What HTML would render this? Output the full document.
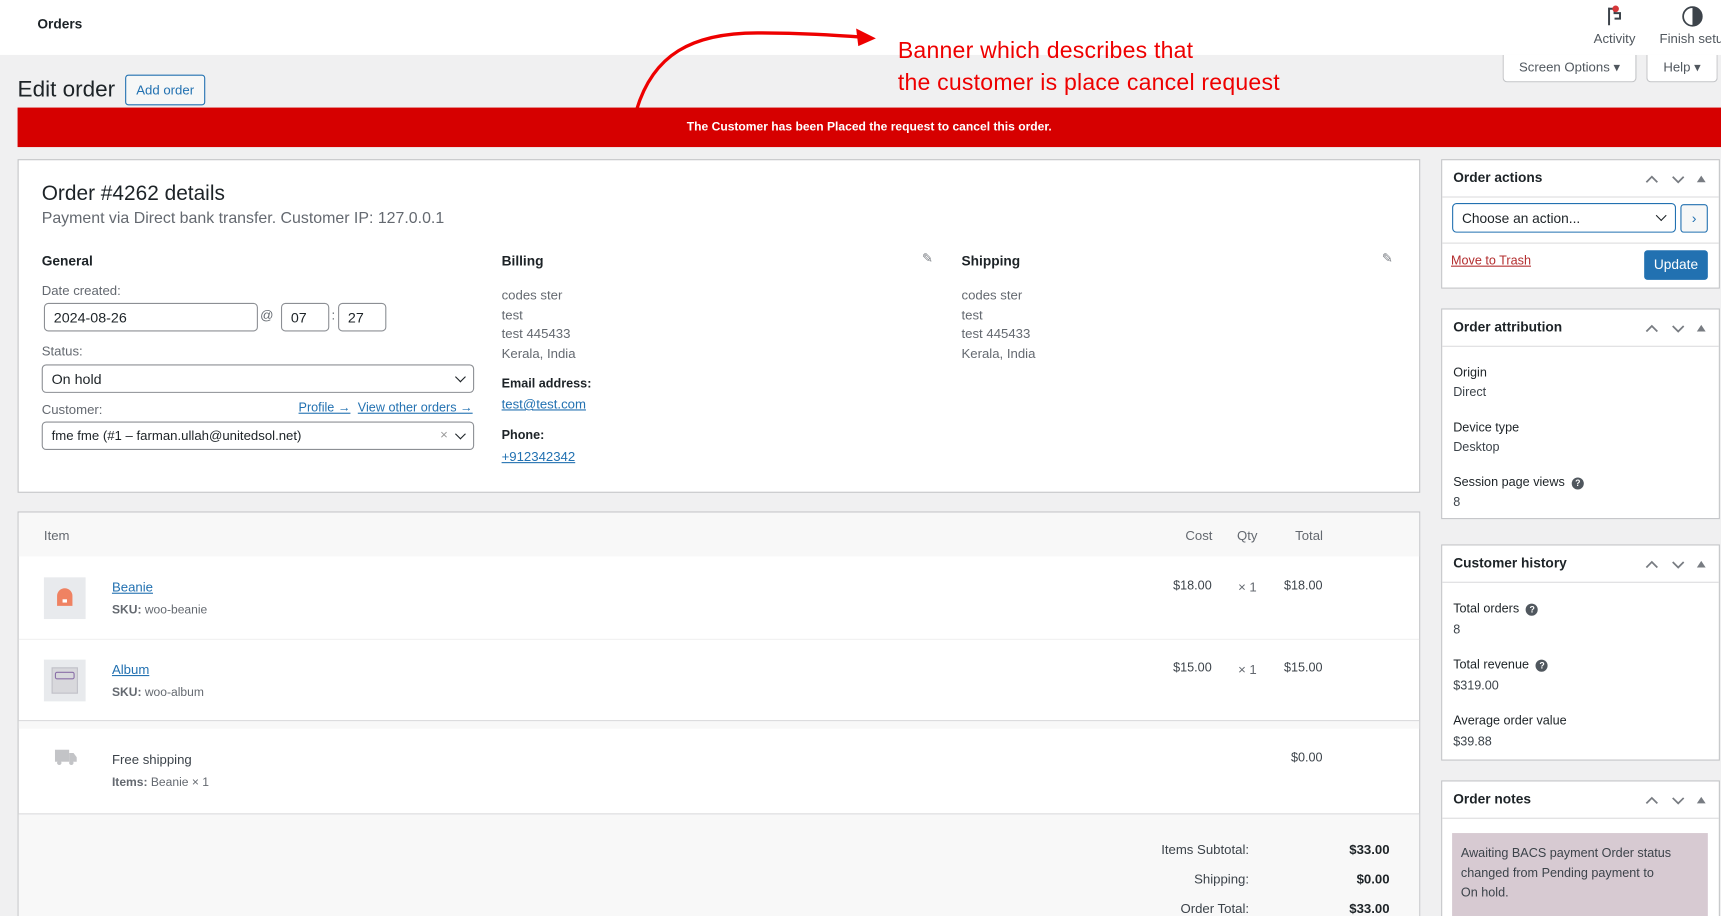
<!DOCTYPE html>
<html><head><meta charset="utf-8">
<style>
*{box-sizing:border-box;margin:0;padding:0}
html,body{width:1721px;height:916px;overflow:hidden;background:#f0f0f1}
#w{position:absolute;left:0;top:0;width:1568px;height:835px;overflow:hidden;transform:scale(1.09758);transform-origin:0 0;font-family:"Liberation Sans",sans-serif;color:#1d2327;font-size:13px;background:#f0f0f1}
.a{position:absolute;white-space:nowrap}
.box{position:absolute;background:#fff;border:1px solid #c3c4c7}
.inp{position:absolute;border:1px solid #8c8f94;border-radius:4px;background:#fff;font-size:13px;padding-left:8px;display:flex;align-items:center}
.g{color:#646970;font-size:12px}
.lnk{color:#2271b1;text-decoration:underline}
.b{font-weight:bold}
.chev{position:absolute;width:7px;height:7px;border-right:1.6px solid #1d2327;border-bottom:1.6px solid #1d2327;transform:rotate(45deg)}
.hdr{position:absolute;left:0;right:0;top:0;height:34px;border-bottom:1px solid #dcdcde}
.hdr span{position:absolute;left:10px;top:9px;font-size:12.5px;font-weight:bold;color:#1d2327}
.hdr svg{position:absolute;right:4px;top:10px}
</style></head><body><div id="w">
<div class="a" style="left:0;top:0;width:1568px;height:50px;background:#fff"></div>
<div class="a" style="left:34px;top:15px;font-size:12.5px;font-weight:bold">Orders</div>
<svg class="a" style="left:1462px;top:4px" width="20" height="20" viewBox="0 0 20 20"><path d="M4 3v16M4 4h5v4h5v5H9" fill="none" stroke="#3c434a" stroke-width="1.8"/><circle cx="10" cy="4" r="3" fill="#d63638"/></svg>
<div class="a" style="left:1452px;top:28px;font-size:12px;color:#50575e">Activity</div>
<svg class="a" style="left:1532px;top:5px" width="20" height="20" viewBox="0 0 20 20"><circle cx="10" cy="10" r="8.5" fill="none" stroke="#3c434a" stroke-width="1.6"/><path d="M10 2a8 8 0 0 1 0 16z" fill="#3c434a"/></svg>
<div class="a" style="left:1512px;top:28px;font-size:12px;color:#50575e">Finish setu</div>
<div class="a" style="left:1369px;top:50px;width:122px;height:25px;background:#fff;border:1px solid #c3c4c7;border-top:none;border-radius:0 0 4px 4px;font-size:12px;color:#50575e;text-align:center;line-height:23px">Screen Options ▾</div>
<div class="a" style="left:1500px;top:50px;width:65px;height:25px;background:#fff;border:1px solid #c3c4c7;border-top:none;border-radius:0 0 4px 4px;font-size:12px;color:#50575e;text-align:center;line-height:23px">Help ▾</div>
<div class="a" style="left:16px;top:70px;font-size:20.5px;font-weight:400">Edit order</div>
<div class="a" style="left:114px;top:68px;width:73px;height:28px;border:1px solid #2271b1;border-radius:3px;color:#2271b1;font-size:12px;text-align:center;line-height:26px;background:#f6f7f7">Add order</div>
<svg class="a" style="left:570px;top:20px" width="240" height="82"><path d="M10 80 C25 30 60 10 120 10 C160 10 190 12 218 14" fill="none" stroke="#e00" stroke-width="3"/><path d="M228 15 L210 6 L212 22 Z" fill="#e00"/></svg>
<div class="a" style="left:818px;top:32px;font-size:21px;color:#e00;line-height:29px;letter-spacing:0.2px">Banner which describes that<br>the customer is place cancel request</div>
<div class="a" style="left:16px;top:98px;width:1552px;height:36px;background:#d60000;color:#fff;font-size:11px;font-weight:bold;text-align:center;line-height:36px">The Customer has been Placed the request to cancel this order.</div>

<div class="box" style="left:16px;top:145px;width:1278px;height:304px"></div>
<div class="a" style="left:38px;top:166px;font-size:19px">Order #4262 details</div>
<div class="a" style="left:38px;top:191px;font-size:14.5px;color:#646970">Payment via Direct bank transfer. Customer IP: 127.0.0.1</div>
<div class="a b" style="left:38px;top:231px;font-size:12.5px">General</div>
<div class="a g" style="left:38px;top:258px">Date created:</div>
<div class="inp" style="left:40px;top:276px;width:195px;height:26px">2024-08-26</div>
<div class="a g" style="left:237px;top:280px">@</div>
<div class="inp" style="left:256px;top:276px;width:44px;height:26px">07</div>
<div class="a g" style="left:302px;top:280px">:</div>
<div class="inp" style="left:308px;top:276px;width:44px;height:26px">27</div>
<div class="a g" style="left:38px;top:313px">Status:</div>
<div class="inp" style="left:38px;top:332px;width:394px;height:26px">On hold</div><div class="chev" style="left:416px;top:340px"></div>
<div class="a g" style="left:38px;top:366px">Customer:</div>
<div class="a lnk" style="left:272px;top:366px;font-size:11.5px">Profile →</div>
<div class="a lnk" style="left:326px;top:366px;font-size:11.5px">View other orders →</div>
<div class="inp" style="left:38px;top:384px;width:394px;height:26px;font-size:12px">fme fme (#1 – farman.ullah@unitedsol.net)</div>
<div class="a" style="left:401px;top:389px;color:#999;font-size:12px">×</div><div class="chev" style="left:416px;top:392px"></div>

<div class="a b" style="left:457px;top:231px;font-size:12.5px">Billing</div>
<div class="a" style="left:840px;top:228px;color:#787c82;font-size:12px">✎</div>
<div class="a g" style="left:457px;top:261px;line-height:17.7px">codes ster<br>test<br>test 445433<br>Kerala, India</div>
<div class="a b" style="left:457px;top:344px;font-size:11.5px">Email address:</div>
<div class="a lnk" style="left:457px;top:361px;font-size:12px">test@test.com</div>
<div class="a b" style="left:457px;top:391px;font-size:11.5px">Phone:</div>
<div class="a lnk" style="left:457px;top:409px;font-size:12px">+912342342</div>
<div class="a b" style="left:876px;top:231px;font-size:12.5px">Shipping</div>
<div class="a" style="left:1259px;top:228px;color:#787c82;font-size:12px">✎</div>
<div class="a g" style="left:876px;top:261px;line-height:17.7px">codes ster<br>test<br>test 445433<br>Kerala, India</div>

<div class="box" style="left:16px;top:466px;width:1278px;height:400px"></div>
<div class="a" style="left:17px;top:467px;width:1276px;height:40px;background:#f8f8f8"></div>
<div class="a g" style="left:40px;top:481px">Item</div>
<div class="a g" style="left:1080px;top:481px">Cost</div>
<div class="a g" style="left:1127px;top:481px">Qty</div>
<div class="a g" style="left:1180px;top:481px">Total</div>
<div class="a" style="left:40px;top:526px;width:38px;height:38px;background:#e8eaed"></div>
<svg class="a" style="left:50px;top:534px" width="18" height="20"><path d="M2 18V9a7 7 0 0 1 14 0v9z" fill="#ef8262"/><rect x="7" y="12" width="4" height="3" fill="#fff"/></svg>
<div class="a lnk" style="left:102px;top:528px;font-size:12px">Beanie</div>
<div class="a g" style="left:102px;top:550px;font-size:11px"><b>SKU:</b> woo-beanie</div>
<div class="a" style="left:1050px;top:528px;width:54px;text-align:right;font-size:11.5px;color:#3c434a">$18.00</div>
<div class="a g" style="left:1128px;top:528px">× 1</div>
<div class="a" style="left:1150px;top:528px;width:55px;text-align:right;font-size:11.5px;color:#3c434a">$18.00</div>
<div class="a" style="left:17px;top:582px;width:1276px;height:1px;background:#f0f0f1"></div>
<div class="a" style="left:40px;top:601px;width:38px;height:38px;background:#e8eaed"></div>
<div class="a" style="left:47px;top:608px;width:24px;height:24px;background:#d8d8dc;border:1px solid #c0c0c8"></div>
<div class="a" style="left:50px;top:612px;width:18px;height:7px;border:1px solid #8a6fa8;border-radius:2px"></div>
<div class="a lnk" style="left:102px;top:603px;font-size:12px">Album</div>
<div class="a g" style="left:102px;top:625px;font-size:11px"><b>SKU:</b> woo-album</div>
<div class="a" style="left:1050px;top:603px;width:54px;text-align:right;font-size:11.5px;color:#3c434a">$15.00</div>
<div class="a g" style="left:1128px;top:603px">× 1</div>
<div class="a" style="left:1150px;top:603px;width:55px;text-align:right;font-size:11.5px;color:#3c434a">$15.00</div>
<div class="a" style="left:17px;top:656px;width:1276px;height:8px;background:#f8f8f8;border-top:1px solid #dcdcde"></div>
<svg class="a" style="left:50px;top:683px" width="20" height="15"><rect x="0" y="0" width="13" height="11" fill="#c3c4c7"/><path d="M13 3h4l3 4v4h-7z" fill="#c3c4c7"/><circle cx="4" cy="12" r="2" fill="#c3c4c7"/><circle cx="15" cy="12" r="2" fill="#c3c4c7"/></svg>
<div class="a" style="left:102px;top:685px;font-size:12px;color:#3c434a">Free shipping</div>
<div class="a g" style="left:102px;top:707px;font-size:11px"><b>Items:</b> Beanie × 1</div>
<div class="a" style="left:1150px;top:685px;width:55px;text-align:right;font-size:11.5px;color:#3c434a">$0.00</div>
<div class="a" style="left:17px;top:741px;width:1276px;height:110px;background:#f8f8f8;border-top:1px solid #dcdcde"></div>
<div class="a" style="left:1038px;top:767px;width:100px;text-align:right;font-size:12px;color:#3c434a">Items Subtotal:</div>
<div class="a b" style="left:1196px;top:767px;width:70px;text-align:right;font-size:12px">$33.00</div>
<div class="a" style="left:1038px;top:794px;width:100px;text-align:right;font-size:12px;color:#3c434a">Shipping:</div>
<div class="a b" style="left:1196px;top:794px;width:70px;text-align:right;font-size:12px">$0.00</div>
<div class="a" style="left:1038px;top:821px;width:100px;text-align:right;font-size:12px;color:#3c434a">Order Total:</div>
<div class="a b" style="left:1196px;top:821px;width:70px;text-align:right;font-size:12px">$33.00</div>

<div class="box" style="left:1313px;top:145px;width:254px;height:118px"><div class="hdr"><span>Order actions</span><svg width="64" height="14" viewBox="0 0 64 14"><path d="M2 10l5-5 5 5M26 5l5 5 5-5" fill="none" stroke="#787c82" stroke-width="1.6"/><path d="M48 10l4-6 4 6z" fill="#787c82"/></svg></div></div>
<div class="inp" style="left:1323px;top:185px;width:204px;height:27px;border:1.5px solid #2271b1;color:#1d2327;font-size:12.5px">Choose an action...</div><div class="chev" style="left:1510px;top:193px"></div>
<div class="a" style="left:1531px;top:186px;width:25px;height:26px;border:1px solid #2271b1;border-radius:3px;background:#f6f7f7;color:#2271b1;text-align:center;line-height:24px;font-size:13px">›</div>
<div class="a" style="left:1314px;top:221px;width:252px;height:1px;background:#dcdcde"></div>
<div class="a" style="left:1322px;top:232px;font-size:11.5px;color:#b32d2e;text-decoration:underline">Move to Trash</div>
<div class="a" style="left:1498px;top:228px;width:58px;height:27px;background:#2271b1;border-radius:3px;color:#fff;font-size:12.5px;text-align:center;line-height:27px">Update</div>

<div class="box" style="left:1313px;top:281px;width:254px;height:192px"><div class="hdr"><span>Order attribution</span><svg width="64" height="14" viewBox="0 0 64 14"><path d="M2 10l5-5 5 5M26 5l5 5 5-5" fill="none" stroke="#787c82" stroke-width="1.6"/><path d="M48 10l4-6 4 6z" fill="#787c82"/></svg></div></div>
<div class="a" style="left:1324px;top:331px;font-size:11.5px;line-height:18px">Origin<br><span style="color:#3c434a">Direct</span></div>
<div class="a" style="left:1324px;top:381px;font-size:11.5px;line-height:18px">Device type<br><span style="color:#3c434a">Desktop</span></div>
<div class="a" style="left:1324px;top:431px;font-size:11.5px;line-height:18px">Session page views &nbsp;<span style="display:inline-block;width:11px;height:11px;border-radius:50%;background:#50575e;color:#fff;font-size:8px;text-align:center;line-height:11px;font-weight:bold">?</span><br><span style="color:#3c434a">8</span></div>

<div class="box" style="left:1313px;top:496px;width:254px;height:197px"><div class="hdr"><span>Customer history</span><svg width="64" height="14" viewBox="0 0 64 14"><path d="M2 10l5-5 5 5M26 5l5 5 5-5" fill="none" stroke="#787c82" stroke-width="1.6"/><path d="M48 10l4-6 4 6z" fill="#787c82"/></svg></div></div>
<div class="a" style="left:1324px;top:546px;font-size:11.5px;line-height:19px">Total orders &nbsp;<span style="display:inline-block;width:11px;height:11px;border-radius:50%;background:#50575e;color:#fff;font-size:8px;text-align:center;line-height:11px;font-weight:bold">?</span><br><span style="color:#3c434a">8</span></div>
<div class="a" style="left:1324px;top:597px;font-size:11.5px;line-height:19px">Total revenue &nbsp;<span style="display:inline-block;width:11px;height:11px;border-radius:50%;background:#50575e;color:#fff;font-size:8px;text-align:center;line-height:11px;font-weight:bold">?</span><br><span style="color:#3c434a">$319.00</span></div>
<div class="a" style="left:1324px;top:648px;font-size:11.5px;line-height:19px">Average order value<br><span style="color:#3c434a">$39.88</span></div>

<div class="box" style="left:1313px;top:711px;width:254px;height:150px"><div class="hdr"><span>Order notes</span><svg width="64" height="14" viewBox="0 0 64 14"><path d="M2 10l5-5 5 5M26 5l5 5 5-5" fill="none" stroke="#787c82" stroke-width="1.6"/><path d="M48 10l4-6 4 6z" fill="#787c82"/></svg></div></div>
<div class="a" style="left:1323px;top:759px;width:233px;height:90px;background:#d7cad2;padding:10px 8px;font-size:11.5px;line-height:18px;color:#3c434a;white-space:normal">Awaiting BACS payment Order status changed from Pending payment to<br>On hold.</div>
</div></body></html>
